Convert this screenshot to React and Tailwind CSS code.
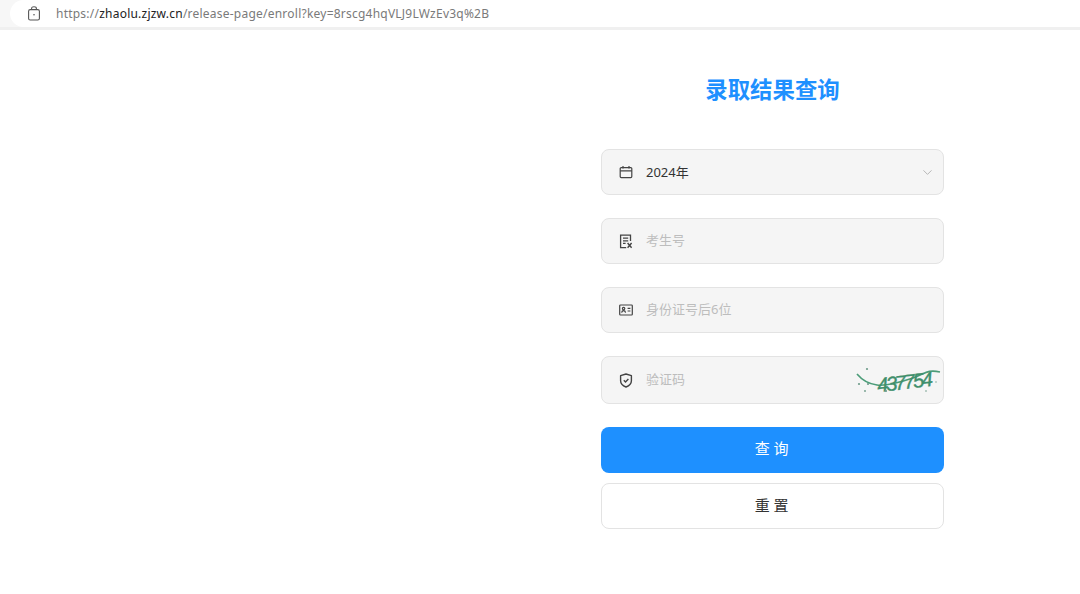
import { ChevronDown } from 'lucide-react';

function CalendarIcon() {
  return (
    <svg width="14" height="14" viewBox="0 0 14 14" fill="none" stroke="#444" strokeWidth="1.2">
      <rect x="1.2" y="2.6" width="11.6" height="10" rx="1" />
      <path d="M1.2 5.8h11.6M4 1v2.6M10 1v2.6" />
    </svg>
  );
}

function ReportIcon() {
  return (
    <svg width="14" height="15" viewBox="0 0 14 15" fill="none" stroke="#444" strokeWidth="1.3">
      <path d="M11.5 7V1.2H1.6v12.4h5.6" />
      <path d="M4 4.2h5.2M4 6.8h5.2M4 9.4h2.6" />
      <path d="M8.6 9l4 4.8M12.6 9l-4 4.8" strokeWidth="1.4" />
    </svg>
  );
}

function IdCardIcon() {
  return (
    <svg width="14" height="12" viewBox="0 0 14 12" fill="none" stroke="#444" strokeWidth="1.2">
      <rect x="0.7" y="1" width="12.6" height="10" rx="0.8" />
      <circle cx="4.6" cy="4.6" r="1.2" />
      <path d="M2.6 8.6c.3-1.4 1.1-2 2-2s1.7.6 2 2M8.6 4.4h2.8M8.6 7h2.8" />
    </svg>
  );
}

function ShieldIcon() {
  return (
    <svg width="14" height="15" viewBox="0 0 14 15" fill="none" stroke="#444" strokeWidth="1.4">
      <path d="M7 1l5.4 1.7v5c0 3-2.3 5.1-5.4 6.3-3.1-1.2-5.4-3.3-5.4-6.3v-5z" strokeLinejoin="round" />
      <path d="M4.8 7.2l1.7 1.7 2.9-3" />
    </svg>
  );
}

function Captcha() {
  return (
    <svg width="88" height="40" viewBox="0 0 88 40" className="shrink-0">
      <path d="M2 14c5 6 12 10 20 11s24-3 36-7 14-9 27-6" fill="none" stroke="#4b9c78" strokeWidth="1.6" />
      <text
        x="22"
        y="29"
        transform="rotate(-7 50 22)"
        fontFamily="'Liberation Sans', sans-serif"
        fontSize="20"
        fontStyle="italic"
        fill="#3f8f6c"
        stroke="#3f8f6c"
        strokeWidth="0.4"
        textLength="56"
      >
        437754
      </text>
      <g fill="#6f9c8a">
        <circle cx="12" cy="9" r="1.1" />
        <circle cx="4" cy="24" r="1.1" />
        <circle cx="13" cy="24" r="1.1" />
        <circle cx="10" cy="31" r="0.9" />
        <circle cx="31" cy="31" r="1.1" />
        <circle cx="71" cy="31" r="0.8" />
        <circle cx="81" cy="22" r="0.7" />
      </g>
    </svg>
  );
}

function Field({ icon, placeholder, value, right, tall }) {
  return (
    <div className={`flex items-center rounded-lg border border-[#e3e3e3] bg-[#f5f5f5] pl-[16px] ${tall ? 'h-[48px]' : 'h-[46px]'}`}>
      <span className="flex w-[15px] justify-center">{icon}</span>
      <span className={`ml-[13px] flex-1 text-[13px] ${value ? 'pt-[1px] text-[#333]' : 'text-[#bdbdbd]'}`}>
        {value || placeholder}
      </span>
      {right}
    </div>
  );
}

export default function App() {
  return (
    <div
      className="h-[594px] overflow-hidden bg-white"
      style={{ fontFamily: "'Noto Sans', 'Noto Sans CJK SC', sans-serif" }}
    >
      <div className="h-[30px] border-b-[3px] border-[#f0f0f0] bg-[#f7f7f7] pl-[10px]">
        <div className="flex h-[27px] items-center rounded-tl-[14px] rounded-bl-[14px] bg-white pl-[17px]">
          <svg width="14" height="15" viewBox="0 0 14 15" fill="none" stroke="#555" strokeWidth="1.1">
            <rect x="1.6" y="3.6" width="10.8" height="10.4" rx="1.6" />
            <path d="M4.6 3.6V2.4C4.6 1.3 5.6 .7 7 .7s2.4.6 2.4 1.7v1.2" />
            <circle cx="7" cy="8.8" r=".8" fill="#555" stroke="none" />
          </svg>
          <span className="ml-[15px] text-[12px] tracking-[0.019em] text-[#7a7a7a]">
            https://<span className="text-[#222]">zhaolu.zjzw.cn</span>/release-page/enroll?key=8rscg4hqVLJ9LWzEv3q%2B
          </span>
        </div>
      </div>

      <div className="ml-[601px] w-[343px] pt-[45px]">
        <h1 className="text-center text-[22.4px] leading-[30px] font-bold text-[#1e90ff]">录取结果查询</h1>

        <div className="mt-[44px] flex flex-col gap-[23px]">
          <Field
            icon={<CalendarIcon />}
            value="2024年"
            right={<ChevronDown size={15} strokeWidth={1.3} className="mr-[8px] text-[#a8a8a8]" />}
          />
          <Field icon={<ReportIcon />} placeholder="考生号" />
          <Field icon={<IdCardIcon />} placeholder="身份证号后6位" />
          <Field icon={<ShieldIcon />} placeholder="验证码" right={<Captcha />} tall />
        </div>

        <button className="mt-[23px] block h-[46px] w-full rounded-lg bg-[#1e90ff] pb-[3px] pl-[2px] text-[15px] tracking-[0.25em] text-white">
          查询
        </button>
        <button className="mt-[10px] block h-[46px] w-full rounded-lg border border-[#e3e3e3] bg-white pb-[2px] pl-[2px] text-[15px] tracking-[0.25em] text-[#333]">
          重置
        </button>
      </div>
    </div>
  );
}
